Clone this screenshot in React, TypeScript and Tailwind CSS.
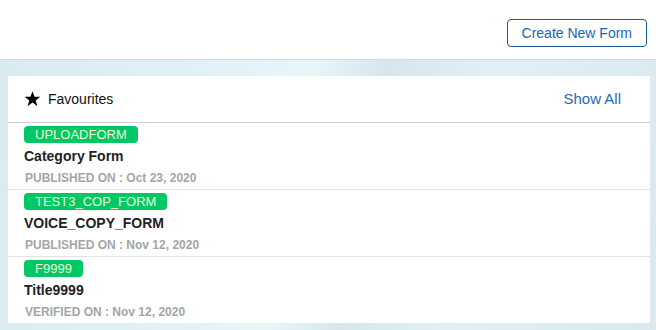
import React from "react";

const items = [
  { code: "UPLOADFORM", title: "Category Form", label: "PUBLISHED ON", date: "Oct 23, 2020" },
  { code: "TEST3_COP_FORM", title: "VOICE_COPY_FORM", label: "PUBLISHED ON", date: "Nov 12, 2020" },
  { code: "F9999", title: "Title9999", label: "VERIFIED ON", date: "Nov 12, 2020" },
];

function Star() {
  return (
    <svg width="17" height="16" viewBox="0 0 24 23" className="shrink-0">
      <path d="M12 0.5l2.9 7.9h8.4l-6.8 5.1 2.6 8.3L12 16.7l-7.1 5.1 2.6-8.3L0.7 8.4h8.4z" fill="#000" />
    </svg>
  );
}

export default function App() {
  return (
    <div
      className="w-[656px] h-[330px] overflow-hidden"
      style={{ fontFamily: '"Liberation Sans", Arial, sans-serif' }}
    >
      <div className="h-[60px] bg-white border-b border-[#d8d8d8] flex items-start justify-end pr-[9px] pt-[19px]">
        <button className="h-[28px] px-[14px] rounded-[4px] border border-[#1b5e9b] text-[#2066b8] text-[14px] leading-none bg-white">
          Create New Form
        </button>
      </div>
      <div className="h-[270px] px-[6px] pt-[16px] bg-[linear-gradient(100deg,#d9ebf0_0%,#e3f1f6_30%,#e8f5f9_45%,#d8e6ec_55%,#e2eff4_70%,#dae9ee_100%)]">
        <div className="bg-white w-[642px] ml-[2px]">
          <div className="h-[47px] flex items-center pl-[16px] pr-[29px] border-b border-[#d0d0d0]">
            <Star />
            <span className="ml-[7px] text-[14px] text-[#111]">Favourites</span>
            <span className="ml-auto text-[15px] text-[#1f6bb8] mt-[1px]">Show All</span>
          </div>
          {items.map((it, i) => (
            <div
              key={it.code}
              className={`pl-[16px] pt-[3px] pb-[3px] ${i < items.length - 1 ? "border-b border-[#e3e3e3]" : ""}`}
            >
              <div className="flex">
                <span className="h-[17px] px-[11px] rounded-[4px] bg-[#00c864] text-[#f2f7d8] text-[13px] leading-[17px]">
                  {it.code}
                </span>
              </div>
              <div className="mt-[3px] h-[20px] leading-[20px] text-[14px] font-bold text-[#222]">{it.title}</div>
              <div className="mt-[4px] h-[16px] leading-[16px] text-[12px] font-bold text-[#a2a5a8] pl-[1px]">
                {it.label} : {it.date}
              </div>
            </div>
          ))}
        </div>
      </div>
    </div>
  );
}
